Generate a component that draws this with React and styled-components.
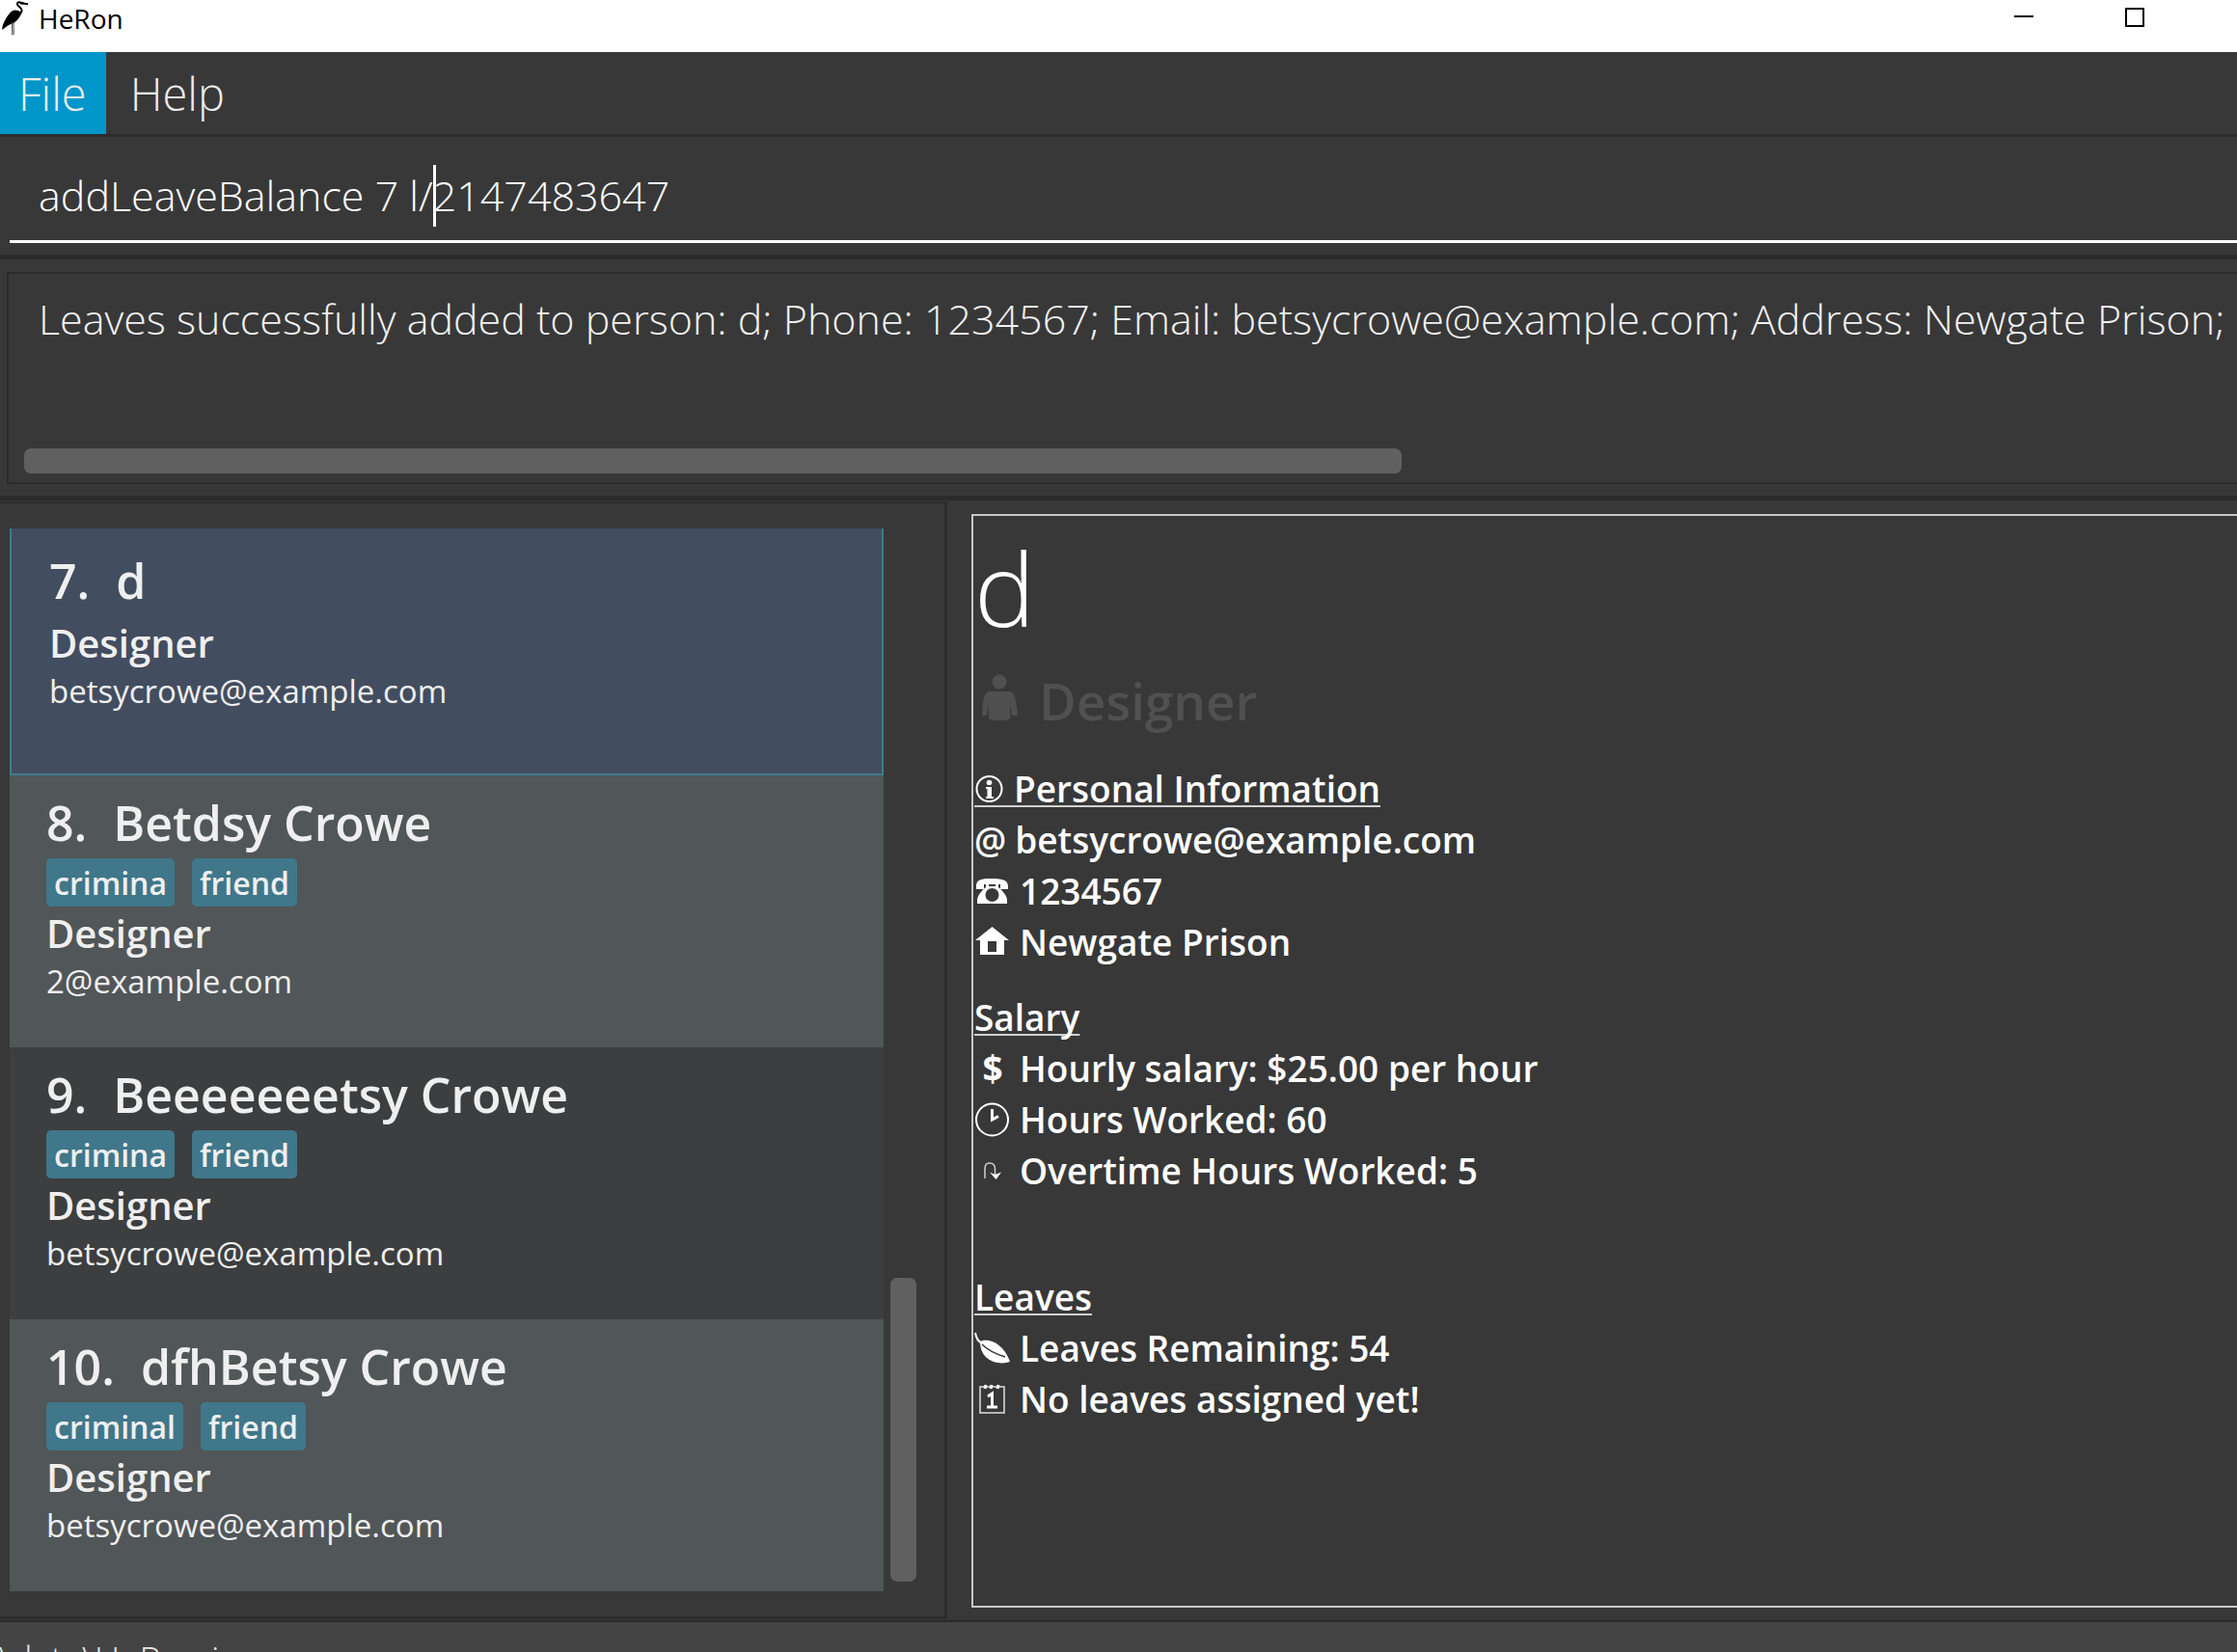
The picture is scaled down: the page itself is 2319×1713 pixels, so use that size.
import React, { useLayoutEffect, useRef, useState } from 'react';
import styled, { createGlobalStyle } from 'styled-components';

const c = {
  bg: '#383838',
  line: '#2b2b2b',
  thumb: '#606060',
  accent: '#0096c9',
  tag: '#3e7b91',
  tagFill: '#40778a',
  selected: '#424d5f',
  even: '#515658',
  odd: '#3c3e3f',
  footer: '#444444',
};

const GlobalStyle = createGlobalStyle`
  *, *::before, *::after { box-sizing: border-box; }
  body {
    margin: 0;
    background: ${c.bg};
    font-family: "Open Sans", "Noto Sans", sans-serif;
    color: #fff;
    overflow: hidden;
  }
`;

const Window = styled.div`
  display: flex;
  flex-direction: column;
  height: 100vh;
  overflow: hidden;
`;

const TitleBar = styled.header`
  flex: none;
  display: flex;
  height: 54px;
  padding-right: 49px;
  background: #fff;
  color: #000;
`;

const Logo = styled.svg`
  width: 32px;
  height: 40px;
  flex: none;
`;

const AppName = styled.h1`
  margin: 0 auto 0 8px;
  font-size: 28px;
  font-weight: 400;
  line-height: 38px;
`;

const WindowButton = styled.button`
  width: 115px;
  height: 36px;
  padding: 0;
  border: 0;
  background: none;
  color: inherit;
  display: flex;
  align-items: center;
  justify-content: center;
`;

const MenuBar = styled.nav`
  flex: none;
  display: flex;
  gap: 6px;
  height: 88px;
  border-bottom: 3px solid ${c.line};
`;

const MenuButton = styled.button`
  padding: 0 20px 0 19px;
  border: 0;
  background: ${(p) => (p.$active ? c.accent : 'transparent')};
  color: #ececec;
  font: 300 47px/64px "Open Sans", sans-serif;
`;

const CommandSection = styled.section`
  flex: none;
  padding: 20px 0 12px 10px;
  border-bottom: 5px solid ${c.line};
`;

const CommandField = styled.div`
  position: relative;
`;

const CommandInput = styled.input`
  display: block;
  width: 100%;
  height: 90px;
  padding: 11px 0 17px 30px;
  border: 0;
  border-bottom: 3px solid #fff;
  border-radius: 0;
  outline: none;
  background: transparent;
  color: #fff;
  caret-color: transparent;
  font: 300 43px/59px "Open Sans", sans-serif;
`;

const Caret = styled.span`
  position: absolute;
  top: 9px;
  width: 3px;
  height: 64px;
  background: #fff;
`;

const ResultSection = styled.section`
  flex: none;
  padding: 13px 0 12px 7px;
  border-bottom: 5px solid ${c.line};
`;

const ResultBox = styled.div`
  padding: 0 0 9px;
  border: 2px solid ${c.line};
  border-right: 0;
`;

const ResultText = styled.textarea`
  display: block;
  width: 100%;
  height: 181px;
  padding: 17px 0 0 31px;
  border: 0;
  outline: none;
  resize: none;
  overflow: hidden;
  white-space: pre;
  background: transparent;
  color: #f2f2f2;
  font: 300 43px/59px "Open Sans", sans-serif;
`;

const ResultThumb = styled.div`
  width: 61.8%;
  height: 26px;
  margin-left: 16px;
  border-radius: 7px;
  background: ${c.thumb};
`;

const Main = styled.main`
  flex: none;
  display: flex;
`;

const ListPane = styled.section`
  flex: 0 0 982px;
  display: flex;
  gap: 7px;
  margin: 1px 0;
  padding: 26px 29px 26px 10px;
  border: solid ${c.line};
  border-width: 2px 3px 3px 0;
`;

const List = styled.ol`
  flex: 1;
  margin: 0;
  padding: 0;
  list-style: none;
`;

const Card = styled.li`
  min-height: ${(p) => (p.$selected ? 256 : 282)}px;
  padding: ${(p) => (p.$selected ? '20px 39px' : '15px 38px')};
  background: ${(p) => p.$fill};
  border: solid ${c.tag};
  border-width: ${(p) => (p.$selected ? '0 2px 2px 2px' : '0')};
  color: #efefef;
`;

const CardName = styled.h2`
  display: flex;
  gap: 27px;
  margin: 0 0 3px;
  font-size: 50px;
  font-weight: 600;
  line-height: 68px;
`;

const Tags = styled.div`
  display: flex;
  gap: 18px;
`;

const Tag = styled.span`
  height: 50px;
  padding: 0 8px;
  border-radius: 5px;
  background: ${c.tagFill};
  font-size: 32px;
  font-weight: 600;
  line-height: 52px;
`;

const CardRole = styled.p`
  margin: 0;
  font-size: 40px;
  font-weight: 600;
  line-height: 56px;
`;

const CardEmail = styled.p`
  margin: 0;
  font-size: 33px;
  line-height: 43px;
`;

const ListThumb = styled.div`
  align-self: flex-end;
  width: 27px;
  height: 315px;
  margin-bottom: 10px;
  border-radius: 7px;
  background: ${c.thumb};
`;

const Details = styled.article`
  flex: 1;
  min-width: 0;
  margin: 14px 0 13px 25px;
  padding-left: 1px;
  border: 2px solid #c8c8c8;
  border-right: 0;
  white-space: nowrap;
`;

const PersonName = styled.h2`
  margin: 0;
  font-size: 106px;
  font-weight: 300;
  line-height: 148px;
`;

const PersonRole = styled.p`
  display: flex;
  gap: 18px;
  margin: 8px 0 28px;
  color: #505050;
  font-size: 53px;
  font-weight: 600;
  line-height: 72px;
`;

const RoleIcon = styled.svg`
  width: 49px;
  height: 72px;
`;

const Group = styled.section`
  margin-bottom: ${(p) => p.$space}px;
  font-size: 37px;
  font-weight: 600;
  line-height: 53px;
`;

const GroupTitle = styled.h3`
  width: max-content;
  margin: 0;
  font: inherit;
  text-decoration: underline 2px #d0d0d0;
  text-underline-offset: 3px;
  text-decoration-skip-ink: none;
`;

const TitleIcon = styled.svg`
  width: 33px;
  height: 38px;
  margin-right: 8px;
`;

const InfoHeading = styled(GroupTitle)`
  display: flex;
  align-items: center;
  text-decoration: none;
  background: linear-gradient(#d0d0d0, #d0d0d0) 0 44px / 100% 2px no-repeat;
`;

const Line = styled.p`
  display: flex;
  align-items: center;
  gap: 9px;
  height: 53px;
  margin: 0;
`;

const LineIcon = styled.svg`
  width: 38px;
  height: 40px;
  flex: none;
`;

const Dollar = styled.span`
  width: 38px;
  text-align: center;
  font-weight: 700;
`;

const Footer = styled.footer`
  flex: none;
  padding: 13px 0;
  border-top: 2px solid ${c.line};
  background: ${c.footer};
  color: #e8e8e8;
  font-size: 37px;
  font-weight: 300;
  line-height: 49px;
  text-indent: -10px;
`;

const people = [
  { id: 7, name: 'd', tags: [], email: 'betsycrowe@example.com', fill: c.selected, selected: true },
  { id: 8, name: 'Betdsy Crowe', tags: ['crimina', 'friend'], email: '2@example.com', fill: c.even },
  { id: 9, name: 'Beeeeeeetsy Crowe', tags: ['crimina', 'friend'], email: 'betsycrowe@example.com', fill: c.odd },
  { id: 10, name: 'dfhBetsy Crowe', tags: ['criminal', 'friend'], email: 'betsycrowe@example.com', fill: c.even },
];

const HeronLogo = () => (
  <Logo viewBox="0 0 32 40" aria-hidden="true">
    <path d="M29 4.200 L23 3.400 C21 1.500 18 1.800 17.800 4 C17.700 6.500 22.500 7.500 22.600 10.500 C22.600 12.500 21 14 20 16" fill="none" stroke="#000" strokeWidth="2" />
    <path d="M20 2 L24.500 2 L25 4.500 L21 4.500 Z" fill="#000" />
    <path d="M12.500 11.500 C15 9.500 20 10.500 22 13 C21.500 17 19 20 16 22.500 C14 24.500 12 25 10 25.500 C7 27 5 29 2.500 31 C1.500 28 4 23 6 19.500 C8 16 10 13.500 12.500 11.500 Z" fill="#000" />
    <path d="M12.500 23 L12.800 36.500 M14 23 L14.200 36" stroke="#444" strokeWidth="1" />
  </Logo>
);

const PhoneIcon = () => (
  <LineIcon viewBox="0 0 38 40" fill="currentColor" aria-hidden="true">
    <path d="M2 15 C2 9 6 7 18 7 C30 7 35 9 35 15 V18 H27 V13 H10 V18 H2 Z" />
    <path fillRule="evenodd" d="M12 12 H15 V15 H22 V12 H25 V16 C29 19 34 25 34 29 V33 H3 V29 C3 25 8 19 12 16 Z M18.500 17 A7 7 0 1 0 18.500 31 A7 7 0 1 0 18.500 17 Z" />
  </LineIcon>
);

const HomeIcon = () => (
  <LineIcon viewBox="0 0 38 40" fill="currentColor" aria-hidden="true">
    <path fillRule="evenodd" d="M18.500 4 L36 18 H31 V33 H6 V18 H1 Z M14 19 V30 H23 V19 Z" />
  </LineIcon>
);

const ClockIcon = () => (
  <LineIcon viewBox="0 0 38 40" fill="none" stroke="currentColor" strokeWidth="2" aria-hidden="true">
    <circle cx="18.500" cy="20" r="16.500" />
    <path d="M18.500 9 V20 L25 16.500" strokeWidth="3" />
  </LineIcon>
);

const TurnIcon = () => (
  <LineIcon viewBox="0 0 38 40" fill="none" stroke="#cfcfcf" strokeWidth="1.500" aria-hidden="true">
    <path d="M11 28 V18 C11 13 13 12 15.500 12 C19 12 21.500 14 21.500 18 V26" />
    <path d="M16 21.500 L21.500 24 L28 21.500 L22.500 29 Z" fill="#fff" stroke="none" />
  </LineIcon>
);

const LeafIcon = () => (
  <LineIcon viewBox="0 0 38 40" aria-hidden="true">
    <path d="M1 4 C2 10 4 13 8 15" fill="none" stroke="#fff" strokeWidth="2" />
    <path d="M6 13 C14 9 30 14 37 34 C26 38 6 34 6 13 Z" fill="#fff" />
    <path d="M8 16 C14 22 22 26 32 29" fill="none" stroke={c.bg} strokeWidth="1.500" />
  </LineIcon>
);

const CalendarIcon = () => (
  <LineIcon viewBox="0 0 38 40" fill="none" stroke="#e0e0e0" strokeWidth="1.500" aria-hidden="true">
    <path d="M6 7 H31 V34 H6 Z" />
    <path d="M11 9 L12 5 M17 9 L18 5 M24 9 L25 5" strokeWidth="3" stroke="#fff" />
    <path d="M14 17 L18.500 14 V28 M13 28 H24" strokeWidth="3" stroke="#fff" />
  </LineIcon>
);

function CommandBox() {
  const value = 'addLeaveBalance 7 l/2147483647';
  const position = value.indexOf('/') + 1;
  const input = useRef(null);
  const [left, setLeft] = useState(0);

  useLayoutEffect(() => {
    const style = getComputedStyle(input.current);
    const ctx = document.createElement('canvas').getContext('2d');
    ctx.font = `${style.fontWeight} ${style.fontSize} ${style.fontFamily}`;
    setLeft(Math.round(parseFloat(style.paddingLeft) + ctx.measureText(value.slice(0, position)).width));
  }, [position]);

  return (
    <CommandSection>
      <CommandField>
        <CommandInput ref={input} aria-label="Command" defaultValue={value} spellCheck={false} />
        <Caret style={{ left }} />
      </CommandField>
    </CommandSection>
  );
}

function PersonCard({ person }) {
  return (
    <Card $selected={person.selected} $fill={person.fill}>
      <CardName>
        <span>{person.id}.</span>
        <span>{person.name}</span>
      </CardName>
      {person.tags.length > 0 && (
        <Tags>
          {person.tags.map((t) => (
            <Tag key={t}>{t}</Tag>
          ))}
        </Tags>
      )}
      <CardRole>Designer</CardRole>
      <CardEmail>{person.email}</CardEmail>
    </Card>
  );
}

export default function App() {
  return (
    <Window>
      <GlobalStyle />
      <TitleBar>
        <HeronLogo />
        <AppName>HeRon</AppName>
        <WindowButton aria-label="Minimize">
          <svg width="20" height="20" aria-hidden="true">
            <path d="M0 9 H20" stroke="#000" strokeWidth="2" />
          </svg>
        </WindowButton>
        <WindowButton aria-label="Maximize">
          <svg width="20" height="20" aria-hidden="true">
            <rect x="1" y="1" width="18" height="18" fill="none" stroke="#000" strokeWidth="2" />
          </svg>
        </WindowButton>
      </TitleBar>
      <MenuBar>
        <MenuButton $active>File</MenuButton>
        <MenuButton>Help</MenuButton>
      </MenuBar>
      <CommandBox />
      <ResultSection>
        <ResultBox>
          <ResultText
            aria-label="Result"
            readOnly
            wrap="off"
            value="Leaves successfully added to person: d; Phone: 1234567; Email: betsycrowe@example.com; Address: Newgate Prison;"
          />
          <ResultThumb />
        </ResultBox>
      </ResultSection>
      <Main>
        <ListPane>
          <List>
            {people.map((p) => (
              <PersonCard key={p.id} person={p} />
            ))}
          </List>
          <ListThumb />
        </ListPane>
        <Details>
          <PersonName>d</PersonName>
          <PersonRole>
            <RoleIcon viewBox="0 0 49 72" fill="currentColor" aria-hidden="true">
              <circle cx="26" cy="16" r="7.500" />
              <path d="M18 26 H35 C41 26 43 30 45 51 H39 L37 39 V54 C33 57 19 57 15 54 V39 L13 51 H8 C9 30 11 26 18 26 Z" />
            </RoleIcon>
            Designer
          </PersonRole>
          <Group $space={25}>
            <InfoHeading>
              <TitleIcon viewBox="0 0 33 38" aria-hidden="true">
                <circle cx="15.500" cy="19" r="13" fill="none" stroke="#fff" strokeWidth="2" />
                <circle cx="15.500" cy="12.500" r="2.800" fill="#fff" />
                <path d="M12 17 H18 V27 H20 V29 H12 V27 H13.500 V19 H12 Z" fill="#fff" />
              </TitleIcon>
              Personal Information
            </InfoHeading>
            <Line>
              <span>@</span>
              <span>betsycrowe@example.com</span>
            </Line>
            <Line>
              <PhoneIcon />
              1234567
            </Line>
            <Line>
              <HomeIcon />
              Newgate Prison
            </Line>
          </Group>
          <Group $space={78}>
            <GroupTitle>Salary</GroupTitle>
            <Line>
              <Dollar>$</Dollar>
              Hourly salary: $25.00 per hour
            </Line>
            <Line>
              <ClockIcon />
              Hours Worked: 60
            </Line>
            <Line>
              <TurnIcon />
              Overtime Hours Worked: 5
            </Line>
          </Group>
          <Group $space={0}>
            <GroupTitle>Leaves</GroupTitle>
            <Line>
              <LeafIcon />
              Leaves Remaining: 54
            </Line>
            <Line>
              <CalendarIcon />
              No leaves assigned yet!
            </Line>
          </Group>
        </Details>
      </Main>
      <Footer>.\data\HeRon.json</Footer>
    </Window>
  );
}
